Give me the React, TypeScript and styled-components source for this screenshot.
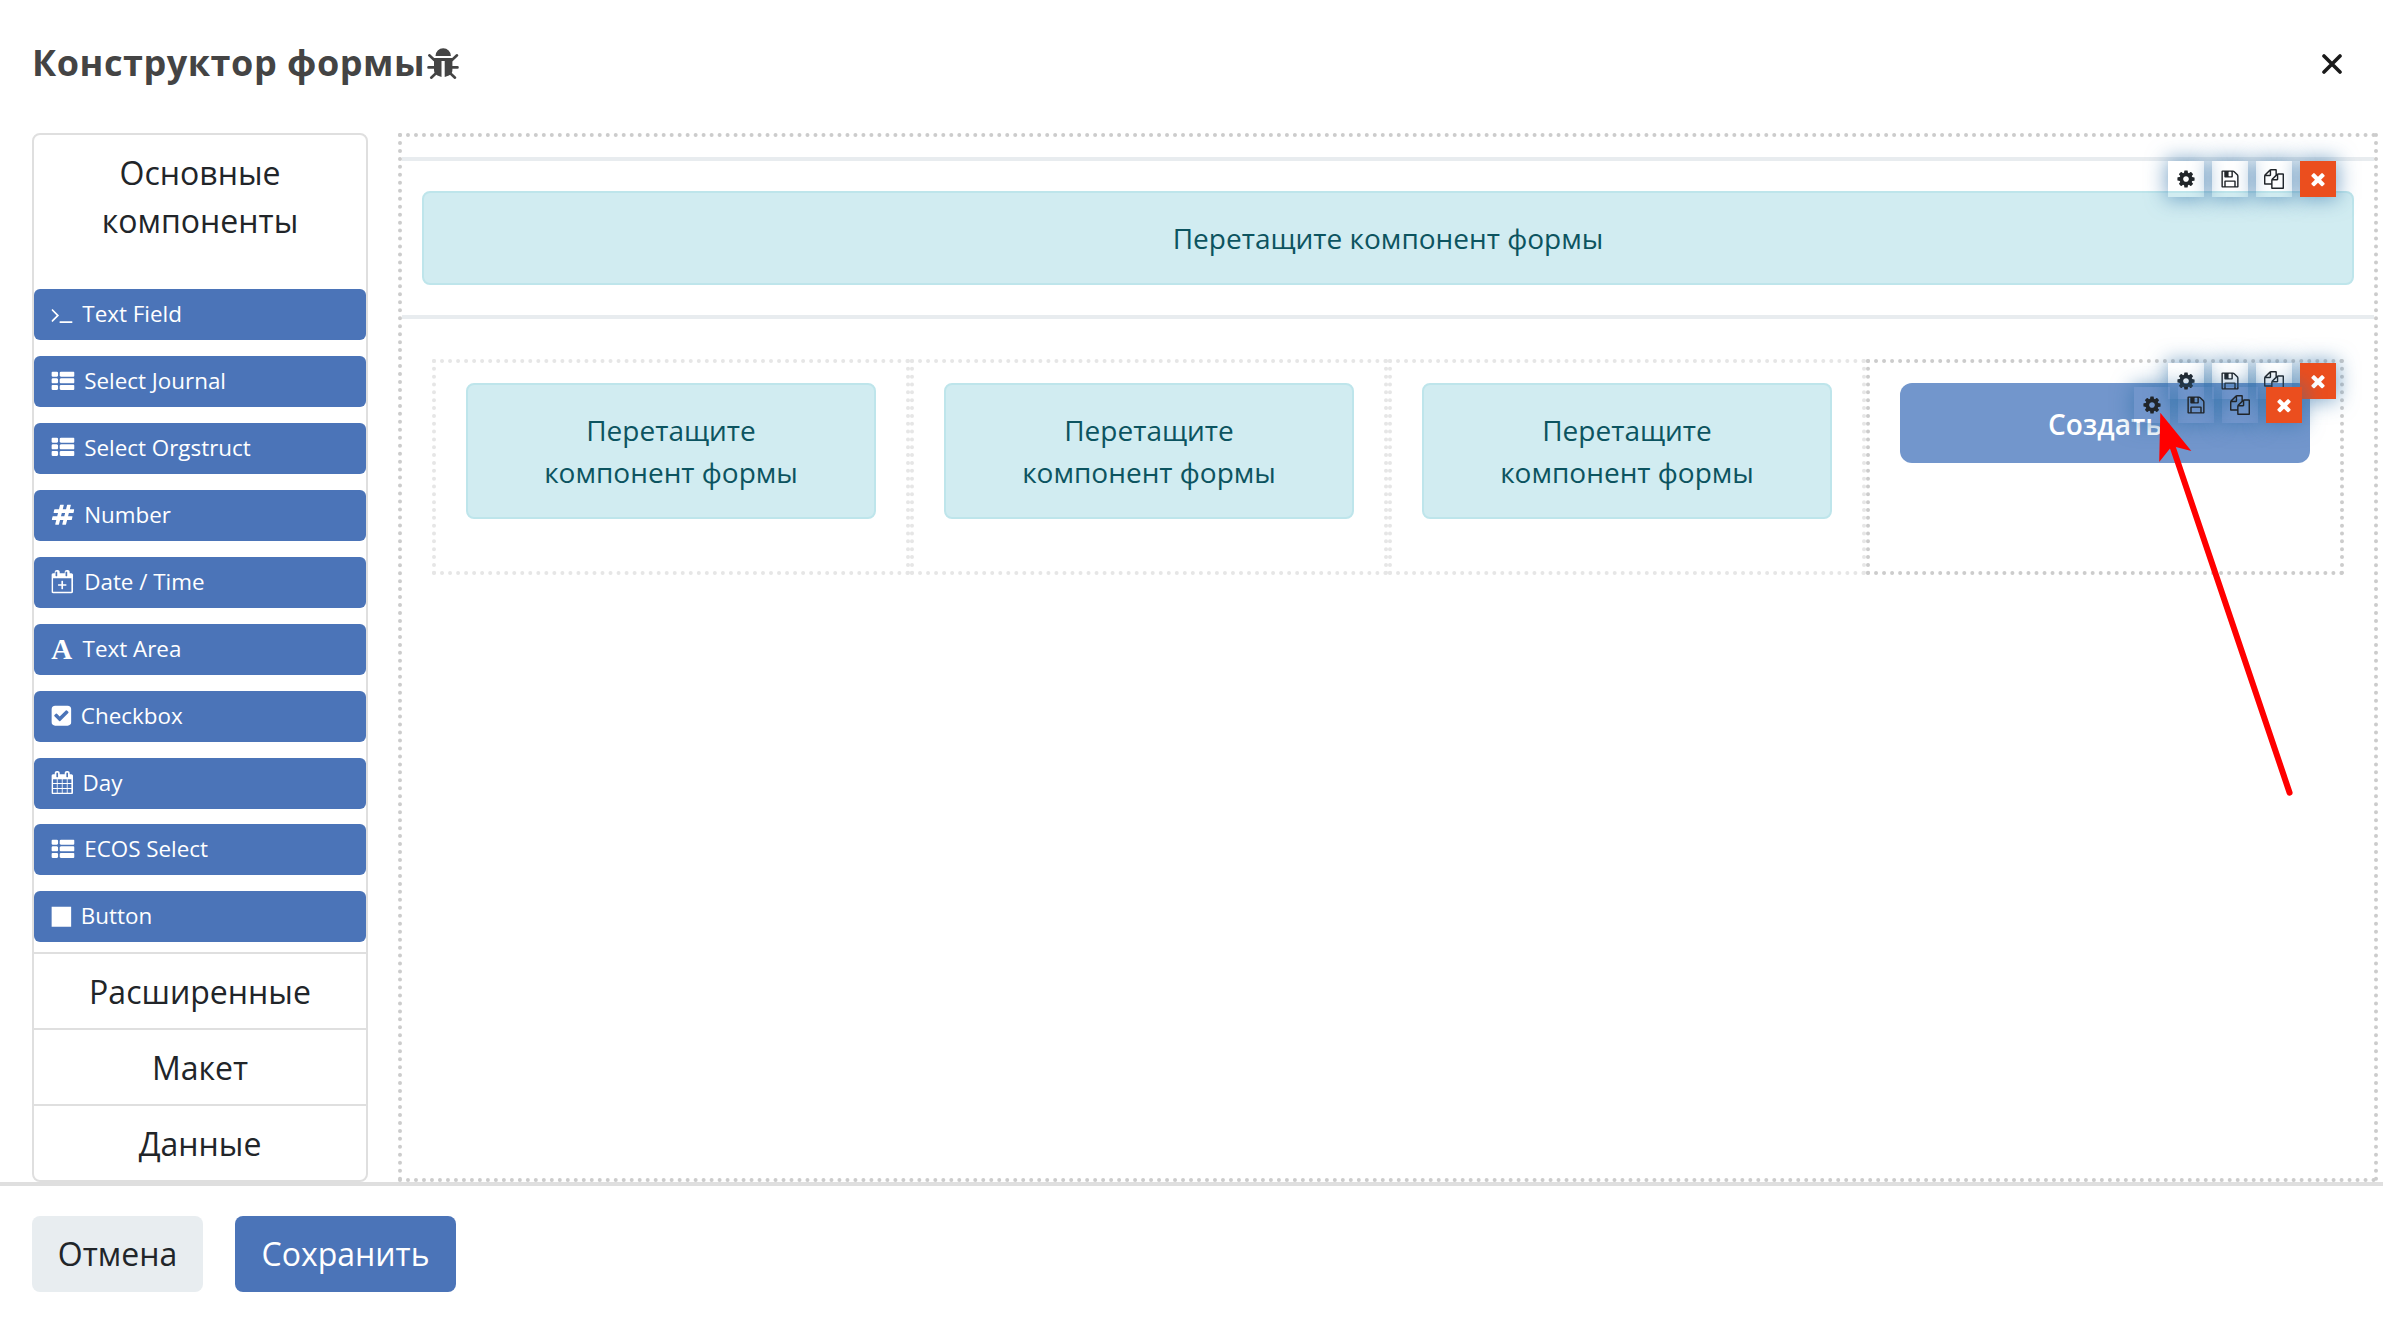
import React from 'react';
import styled, { createGlobalStyle, css } from 'styled-components';

const GlobalStyle = createGlobalStyle`
  *, *::before, *::after { box-sizing: border-box; }
  body {
    margin: 0;
    background: #fff;
    color: #212529;
    font-family: 'Open Sans', 'Noto Sans', sans-serif;
    font-size: 28px;
    line-height: 42px;
  }
`;

const Modal = styled.div`
  width: 2383px;
  height: 1322px;
  display: flex;
  flex-direction: column;
  overflow: hidden;
  background: #fff;
`;

const Header = styled.header`
  height: 133px;
  padding: 0 41px 5px 32px;
  display: flex;
  align-items: center;
  justify-content: space-between;
  flex: none;
`;

const Title = styled.h1`
  margin: 0 0 2px;
  display: flex;
  align-items: center;
  font-size: 36px;
  line-height: 48px;
  font-weight: 700;
  letter-spacing: 0.54px;
  color: #444;
`;

const BugSvg = styled.svg`
  width: 32px;
  height: 32px;
  margin: 2px 0 0 2px;
`;

const CloseButton = styled.button`
  border: 0;
  padding: 0;
  background: none;
  display: flex;
`;

const Body = styled.main`
  height: 1049px;
  padding: 0 5px 0 32px;
  display: flex;
  gap: 30px;
  flex: none;
`;

const Sidebar = styled.aside`
  width: 336px;
  border: 2px solid #dfdfdf;
  border-radius: 8px;
  display: flex;
  flex-direction: column;
  flex: none;
`;

const GroupTitle = styled.div<{ $open?: boolean }>`
  height: ${p => (p.$open ? 154 : 76)}px;
  padding: ${p => (p.$open ? '14px 40px 0' : '14px 0 0')};
  border-top: ${p => (p.$open ? '0' : '2px solid #dfdfdf')};
  font-size: 32px;
  line-height: 48px;
  font-weight: 400;
  text-align: center;
  flex: none;
`;

const Palette = styled.div`
  height: 663px;
  padding-top: 0.4px;
  display: flex;
  flex-direction: column;
  gap: 15.88px;
  flex: none;
`;

const PaletteItem = styled.div`
  height: 51px;
  padding: 0 17px 1px;
  border-radius: 6px;
  background: #4b74b8;
  color: #fff;
  display: flex;
  align-items: center;
  gap: 9.9px;
  font-size: 22.4px;
  line-height: 34px;
  flex: none;

  svg { transform: translateX(0.4px); }
`;

const Glyph = styled.svg`
  display: block;
  fill: currentColor;
  flex: none;
`;

const LetterIcon = styled.span`
  width: 21.7px;
  font-family: 'Liberation Serif', serif;
  font-weight: 700;
  font-size: 29px;
  text-align: center;
`;

const Canvas = styled.section`
  flex: 1;
  border: 4px dotted #ccc;
  padding-top: 20px;
`;

const Panel = styled.div`
  position: relative;
  height: 162px;
  padding: 30px 20px 0;
  border-top: 4px solid #e8ecef;
  border-bottom: 4px solid #e8ecef;
`;

const DropZone = styled.div`
  padding: 24px 40px;
  border: 2px solid #bee5eb;
  border-radius: 8px;
  background: #d1ecf1;
  color: #0c5460;
  font-weight: 400;
  text-align: center;
`;

const Columns = styled.div`
  margin: 40px 30px 0;
  display: grid;
  grid-template-columns: repeat(4, 478px);
`;

const Column = styled.div<{ $active?: boolean }>`
  position: relative;
  height: 216px;
  padding: 20px 30px;
  border: 4px dotted ${p => (p.$active ? '#ccc' : '#e6e6e6')};
`;

const ActionButton = styled.div`
  height: 80px;
  padding-top: 1px;
  border-radius: 12px;
  background: #7296cc;
  color: #fff;
  font-weight: 600;
  display: flex;
  align-items: center;
  justify-content: center;
`;

const Tools = styled.div<{ $top: number; $right: number }>`
  position: absolute;
  top: ${p => p.$top}px;
  right: ${p => p.$right}px;
  display: flex;
  flex-direction: row-reverse;
  gap: 8px;
`;

const Tool = styled.div<{ $danger?: boolean }>`
  width: 36px;
  height: 36px;
  display: flex;
  align-items: center;
  justify-content: center;
  box-shadow: 0 0 20px 2px rgba(48, 113, 169, 0.6);
  ${p => p.$danger && css`
    background: #eb4e1e;
    color: #fff;
  `}
`;

const Footer = styled.footer`
  flex: 1;
  border-top: 4px solid #dfdfdf;
  padding: 30px 32px;
  display: flex;
  gap: 32px;
  align-items: flex-start;
`;

const FooterButton = styled.button<{ $primary?: boolean }>`
  width: ${p => (p.$primary ? 221 : 171)}px;
  height: 76px;
  padding: 0;
  border: 0;
  border-radius: 8px;
  background: ${p => (p.$primary ? '#4b74b8' : '#e8edf0')};
  color: ${p => (p.$primary ? '#fff' : '#212529')};
  font: 400 32px/48px 'Open Sans', 'Noto Sans', sans-serif;
`;

const Arrow = styled.svg`
  position: absolute;
  left: 2140px;
  top: 400px;
  width: 170px;
  height: 410px;
`;

const ICONS: Record<string, { w: number; d: string; x?: number }> = {
  cog: { w: 1792, d: 'M1152 896q0-106-75-181t-181-75-181 75-75 181 75 181 181 75 181-75 75-181zm512-109v222q0 12-8 23t-20 13l-185 28q-19 54-39 91 35 50 107 138 10 12 10 25t-9 23q-27 37-99 108t-94 71q-12 0-26-9l-138-108q-44 23-91 38-16 136-29 186-7 28-36 28h-222q-14 0-24.5-8.5t-11.5-21.5l-28-184q-49-16-90-37l-141 107q-10 9-25 9-14 0-25-11-126-114-165-168-7-10-7-23 0-12 8-23 15-21 51-66.5t54-70.5q-27-50-41-99l-183-27q-13-2-21-12.5t-8-23.5v-222q0-12 8-23t19-13l186-28q14-46 39-92-40-57-107-138-10-12-10-24 0-10 9-23 26-36 98.500-107.500t94.500-71.500q13 0 26 10l138 107q44-23 91-38 16-136 29-186 7-28 36-28h222q14 0 24.500 8.500t11.500 21.500l28 184q49 16 90 37l142-107q9-9 24-9 13 0 25 10 129 119 165 170 7 8 7 22 0 12-8 23-15 21-51 66.500t-54 70.500q26 50 41 98l183 28q13 2 21 12.500t8 23.500z' },
  save: { w: 1792, d: 'M512 1536h768v-384h-768v384zm896 0h128v-896q0-14-10-38.500t-20-34.500l-281-281q-10-10-34-20t-39-10v416q0 40-28 68t-68 28h-576q-40 0-68-28t-28-68v-416h-128v1280h128v-416q0-40 28-68t68-28h832q40 0 68 28t28 68v416zm-384-928v-320q0-13-9.500-22.500t-22.500-9.500h-192q-13 0-22.500 9.500t-9.500 22.500v320q0 13 9.500 22.500t22.500 9.500h192q13 0 22.500-9.500t9.500-22.500zm640 32v928q0 40-28 68t-68 28h-1344q-40 0-68-28t-28-68v-1344q0-40 28-68t68-28h928q40 0 88 20t76 48l280 280q28 28 48 76t20 88z' },
  copy: { w: 1792, d: 'M1696 384q40 0 68 28t28 68v1216q0 40-28 68t-68 28h-960q-40 0-68-28t-28-68v-288h-544q-40 0-68-28t-28-68v-672q0-40 20-88t48-76l408-408q28-28 76-48t88-20h416q40 0 68 28t28 68v328q68-40 128-40h416zm-544 213l-299 299h299v-299zm-640-384l-299 299h299v-299zm196 647l316-316v-416h-384v416q0 40-28 68t-68 28h-416v640h512v-256q0-40 20-88t48-76zm956 804v-1152h-384v416q0 40-28 68t-68 28h-416v640h896z' },
  times: { w: 1792, d: 'M1490 1322q0 40-28 68l-136 136q-28 28-68 28t-68-28l-294-294-294 294q-28 28-68 28t-68-28l-136-136q-28-28-28-68t28-68l294-294-294-294q-28-28-28-68t28-68l136-136q28-28 68-28t68 28l294 294 294-294q28-28 68-28t68 28l136 136q28 28 28 68t-28 68l-294 294 294 294q28 28 28 68z' },
  terminal: { w: 1651, x: 77, d: 'M649 983l-466 466q-10 10-23 10t-23-10l-50-50q-10-10-10-23t10-23l393-393-393-393q-10-10-10-23t10-23l50-50q10-10 23-10t23 10l466 466q10 10 10 23t-10 23zm1079 457v64q0 14-9 23t-23 9h-960q-14 0-23-9t-9-23v-64q0-14 9-23t23-9h960q14 0 23 9t9 23z' },
  list: { w: 1792, d: 'M512 1248v192q0 40-28 68t-68 28h-320q-40 0-68-28t-28-68v-192q0-40 28-68t68-28h320q40 0 68 28t28 68zm0-512v192q0 40-28 68t-68 28h-320q-40 0-68-28t-28-68v-192q0-40 28-68t68-28h320q40 0 68 28t28 68zm1280 512v192q0 40-28 68t-68 28h-960q-40 0-68-28t-28-68v-192q0-40 28-68t68-28h960q40 0 68 28t28 68zm-1280-1024v192q0 40-28 68t-68 28h-320q-40 0-68-28t-28-68v-192q0-40 28-68t68-28h320q40 0 68 28t28 68zm1280 512v192q0 40-28 68t-68 28h-960q-40 0-68-28t-28-68v-192q0-40 28-68t68-28h960q40 0 68 28t28 68zm0-512v192q0 40-28 68t-68 28h-960q-40 0-68-28t-28-68v-192q0-40 28-68t68-28h960q40 0 68 28t28 68z' },
  hash: { w: 1792, d: 'M991 1024l64-256h-254l-64 256h254zm768-504l-56 224q-7 24-31 24h-327l-64 256h311q15 0 25 12 10 14 6 28l-56 224q-5 24-31 24h-327l-81 328q-7 24-31 24h-224q-16 0-26-12-9-12-6-28l78-312h-254l-81 328q-7 24-31 24h-225q-15 0-25-12-9-12-6-28l78-312h-311q-15 0-25-12-9-12-6-28l56-224q7-24 31-24h327l64-256h-311q-15 0-25-12-10-14-6-28l56-224q5-24 31-24h327l81-328q7-24 32-24h224q15 0 25 12 9 12 6 28l-78 312h254l81-328q7-24 32-24h224q15 0 25 12 9 12 6 28l-78 312h311q15 0 25 12 9 12 6 28z' },
  calendarPlus: { w: 1792, x: 64, d: 'M1600 256q52 0 90 38t38 90v1280q0 52-38 90t-90 38h-1408q-52 0-90-38t-38-90v-1280q0-52 38-90t90-38h128v-96q0-66 47-113t113-47h64q66 0 113 47t47 113v96h384v-96q0-66 47-113t113-47h64q66 0 113 47t47 113v96h128zm-448-96v288q0 14 9 23t23 9h64q14 0 23-9t9-23v-288q0-14-9-23t-23-9h-64q-14 0-23 9t-9 23zm-768 0v288q0 14 9 23t23 9h64q14 0 23-9t9-23v-288q0-14-9-23t-23-9h-64q-14 0-23 9t-9 23zm1216 1504v-1024h-1408v1024h1408zm-640-576h224q14 0 23 9t9 23v64q0 14-9 23t-23 9h-224v224q0 14-9 23t-23 9h-64q-14 0-23-9t-9-23v-224h-224q-14 0-23-9t-9-23v-64q0-14 9-23t23-9h224v-224q0-14 9-23t23-9h64q14 0 23 9t9 23v224z' },
  check: { w: 1536, x: 128, d: 'M813 1299l614-614q19-19 19-45t-19-45l-102-102q-19-19-45-19t-45 19l-467 467-211-211q-19-19-45-19t-45 19l-102 102q-19 19-19 45t19 45l358 358q19 19 45 19t45-19zm851-883v960q0 119-84.500 203.500t-203.500 84.500h-960q-119 0-203.500-84.500t-84.500-203.500v-960q0-119 84.500-203.500t203.500-84.500h960q119 0 203.500 84.500t84.500 203.500z' },
  calendar: { w: 1664, x: 64, d: 'M192 1664h288v-288h-288v288zm352 0h320v-288h-320v288zm-352-352h288v-320h-288v320zm352 0h320v-320h-320v320zm-352-384h288v-288h-288v288zm736 736h320v-288h-320v288zm-384-736h320v-288h-320v288zm768 736h288v-288h-288v288zm-384-352h320v-320h-320v320zm-352-864v-288q0-13-9.500-22.500t-22.500-9.500h-64q-13 0-22.500 9.500t-9.500 22.500v288q0 13 9.500 22.500t22.500 9.500h64q13 0 22.500-9.500t9.500-22.500zm736 864h288v-320h-288v320zm-384-384h320v-288h-320v288zm384 0h288v-288h-288v288zm32-480v-288q0-13-9.500-22.500t-22.500-9.500h-64q-13 0-22.500 9.500t-9.500 22.500v288q0 13 9.500 22.500t22.500 9.500h64q13 0 22.500-9.500t9.500-22.500zm384-64v1280q0 52-38 90t-90 38h-1408q-52 0-90-38t-38-90v-1280q0-52 38-90t90-38h128v-96q0-66 47-113t113-47h64q66 0 113 47t47 113v96h384v-96q0-66 47-113t113-47h64q66 0 113 47t47 113v96h128q52 0 90 38t38 90z' },
  square: { w: 1536, x: 128, d: 'M128 128h1536v1536h-1536z' },
};

function Icon({ name, size }: { name: string; size: number }) {
  const { w, d, x = 0 } = ICONS[name];
  return (
    <Glyph width={(w / 1792) * size} height={size} viewBox={`${x} 0 ${w} 1792`}>
      <path d={d} />
    </Glyph>
  );
}

function ToolBar({ top, right }: { top: number; right: number }) {
  return (
    <Tools $top={top} $right={right}>
      <Tool $danger><Icon name="times" size={20} /></Tool>
      <Tool><Icon name="copy" size={20} /></Tool>
      <Tool><Icon name="save" size={20} /></Tool>
      <Tool><Icon name="cog" size={20} /></Tool>
    </Tools>
  );
}

const COMPONENTS: [string, string][] = [
  ['terminal', 'Text Field'],
  ['list', 'Select Journal'],
  ['list', 'Select Orgstruct'],
  ['hash', 'Number'],
  ['calendarPlus', 'Date / Time'],
  ['letter', 'Text Area'],
  ['check', 'Checkbox'],
  ['calendar', 'Day'],
  ['list', 'ECOS Select'],
  ['square', 'Button'],
];

const HINT = 'Перетащите компонент формы';

export default function App() {
  return (
    <>
      <GlobalStyle />
      <Modal>
        <Header>
          <Title>
            Конструктор формы
            <BugSvg viewBox="0 0 32 32" fill="#444" stroke="#444" strokeWidth="2.6" strokeLinecap="round">
              <path stroke="none" d="M8.500 8a7.700 7.700 0 0 1 15.400 0zM7 10h18.400v12q0 3.500-3.500 5.500l-4.200 1.500V13h-3.200v16l-4-1.500q-3.500-2-3.500-5.500z" />
              <path fill="none" d="M2.300 7.300l5 4.700M30 7.300l-5 4.700M1.500 19.400H7M25 19.400h5.500M4.200 29.700l5-4.700M28 29.700l-5-4.700" />
            </BugSvg>
          </Title>
          <CloseButton aria-label="Закрыть">
            <svg width="20" height="20" viewBox="0 0 20 20" stroke="#1a1a1a" strokeWidth="3.600" strokeLinecap="round">
              <path d="M2 2l16 16M18 2L2 18" />
            </svg>
          </CloseButton>
        </Header>
        <Body>
          <Sidebar>
            <GroupTitle $open>Основные компоненты</GroupTitle>
            <Palette>
              {COMPONENTS.map(([icon, label]) => (
                <PaletteItem key={label}>
                  {icon === 'letter' ? <LetterIcon>A</LetterIcon> : <Icon name={icon} size={23.3} />}
                  {label}
                </PaletteItem>
              ))}
            </Palette>
            <GroupTitle>Расширенные</GroupTitle>
            <GroupTitle>Макет</GroupTitle>
            <GroupTitle>Данные</GroupTitle>
          </Sidebar>
          <Canvas>
            <Panel>
              <DropZone>{HINT}</DropZone>
              <ToolBar top={0} right={38} />
            </Panel>
            <Columns>
              <Column><DropZone>{HINT}</DropZone></Column>
              <Column><DropZone>{HINT}</DropZone></Column>
              <Column><DropZone>{HINT}</DropZone></Column>
              <Column $active>
                <ActionButton>Создать</ActionButton>
                <ToolBar top={0} right={4} />
                <ToolBar top={24} right={38} />
              </Column>
            </Columns>
          </Canvas>
        </Body>
        <Footer>
          <FooterButton>Отмена</FooterButton>
          <FooterButton $primary>Сохранить</FooterButton>
        </Footer>
      </Modal>
      <Arrow viewBox="2140 400 170 410">
        <path d="M2173 448L2289.600 792.700" stroke="#f00" strokeWidth="6" strokeLinecap="round" />
        <path d="M2160.300 412.700L2191.400 451L2172 446L2159.200 462Z" fill="#f00" />
      </Arrow>
    </>
  );
}
